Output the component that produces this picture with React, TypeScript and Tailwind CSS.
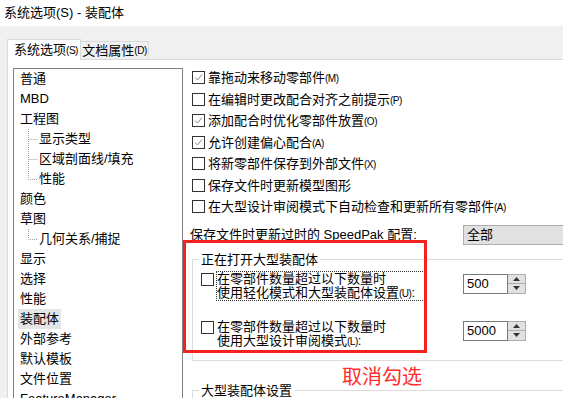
import React from 'react';

const font = { fontFamily: '"Liberation Sans", "Noto Sans CJK SC", sans-serif' };

const Box: React.FC<{ checked?: boolean }> = ({ checked }) => (
  <span className="w-[13px] h-[13px] shrink-0 border border-[#333333] bg-white flex items-center justify-center">
    {checked && (
      <svg width="11" height="11" viewBox="0 0 11 11">
        <path d="M2 5.5 L4.5 8 L9 2.5" fill="none" stroke="#8a8a8a" strokeWidth="1" />
      </svg>
    )}
  </span>
);

const Key: React.FC<{ k: string }> = ({ k }) => <span className="text-[10px] tracking-[-0.5px]">({k})</span>;

const options: { text: string; key?: string; checked: boolean }[] = [
  { text: '靠拖动来移动零部件', key: 'M', checked: true },
  { text: '在编辑时更改配合对齐之前提示', key: 'P', checked: false },
  { text: '添加配合时优化零部件放置', key: 'O', checked: true },
  { text: '允许创建偏心配合', key: 'A', checked: true },
  { text: '将新零部件保存到外部文件', key: 'X', checked: false },
  { text: '保存文件时更新模型图形', checked: false },
  { text: '在大型设计审阅模式下自动检查和更新所有零部件', key: 'A', checked: false },
];

type Node = { label: string; sub?: boolean; last?: boolean; selected?: boolean };
const tree: Node[] = [
  { label: '普通' },
  { label: 'MBD' },
  { label: '工程图' },
  { label: '显示类型', sub: true },
  { label: '区域剖面线/填充', sub: true },
  { label: '性能', sub: true, last: true },
  { label: '颜色' },
  { label: '草图' },
  { label: '几何关系/捕捉', sub: true, last: true },
  { label: '显示' },
  { label: '选择' },
  { label: '性能' },
  { label: '装配体', selected: true },
  { label: '外部参考' },
  { label: '默认模板' },
  { label: '文件位置' },
  { label: 'FeatureManager' },
];

const Spin: React.FC<{ value: string }> = ({ value }) => (
  <div className="flex h-[20px] w-[63px] shrink-0">
    <div className="flex-1 border border-[#7a7a7a] bg-white pl-[3px] flex items-center text-[13px]">{value}</div>
    <div className="w-[18px] flex flex-col border border-[#adadad] border-l-0 bg-[#e1e1e1]">
      <div className="flex-1 flex items-center justify-center border-b border-[#adadad]">
        <svg width="7" height="4" viewBox="0 0 7 4"><path d="M0 4 L3.5 0 L7 4 Z" fill="#333" /></svg>
      </div>
      <div className="flex-1 flex items-center justify-center">
        <svg width="7" height="4" viewBox="0 0 7 4"><path d="M0 0 L3.5 4 L7 0 Z" fill="#333" /></svg>
      </div>
    </div>
  </div>
);

export default function App() {
  return (
    <div className="relative w-[563px] h-[398px] overflow-hidden bg-[#f0f0f0] text-[13px] text-black" style={font}>
      {/* title */}
      <div className="h-[26px] bg-white pl-[4px] flex items-center text-[13px]">系统选项(S) - 装配体</div>

      {/* tabs */}
      <div className="mt-[13px] pl-[7px] flex items-end h-[20px]">
        <div className="h-[21px] w-[74px] bg-white border border-[#d9d9d9] border-b-0 flex items-center justify-center pl-[4px] relative z-10 -mb-px">
          系统选项<Key k="S" />
        </div>
        <div className="h-[18px] w-[68px] bg-[#f0f0f0] border border-[#d9d9d9] border-l-0 border-b-0 flex items-center justify-center">
          文档属性<Key k="D" />
        </div>
      </div>

      {/* panel */}
      <div className="ml-[7px] bg-white border-t border-l border-[#d9d9d9] h-[400px] flex">
        {/* tree list */}
        <div className="ml-[5px] mt-[8px] w-[170px] h-[400px] border border-[#828282] flex flex-col">
          {tree.map((n, i) => (
            <div key={i} className="h-[20px] flex items-center shrink-0">
              {n.sub ? (
                <>
                  <svg width="19" height="20" className="ml-[6px] shrink-0">
                    <path d={n.last ? 'M8.5 0 V10.5 H18' : 'M8.5 0 V20 M8.5 10.5 H18'} stroke="#a0a0a0" strokeDasharray="1 1" fill="none" />
                  </svg>
                  <span>{n.label}</span>
                </>
              ) : (
                <span className={`ml-[4px] px-[2px] h-[20px] flex items-center ${n.selected ? 'bg-[#e5e5e5]' : ''}`}>{n.label}</span>
              )}
            </div>
          ))}
        </div>

        {/* right side */}
        <div className="flex-1 pt-[7px]">
          {options.map((o, i) => (
            <div key={i} className="h-[21.5px] flex items-center pl-[9px] gap-[3px]">
              <Box checked={o.checked} />
              <span>
                {o.text}
                {o.key && <Key k={o.key} />}
              </span>
            </div>
          ))}

          <div className="mt-[7px] h-[20px] flex items-center pl-[7px]">
            <span className="w-[273px]">保存文件时更新过时的 SpeedPak 配置:</span>
            <div className="h-[20px] flex-1 bg-[#e1e1e1] border border-[#adadad] border-r-0 pl-[3px] flex items-center">全部</div>
          </div>

          <fieldset className="mt-[7px] ml-[9px] border border-[#dcdcdc] border-r-0 h-[109px]">
            <legend className="ml-[6px] px-[2px] leading-[16px]">正在打开大型装配体</legend>
            <div className="pl-[8px] pt-[3px] flex items-start">
              <div className="mt-[2px]"><Box /></div>
              <div className="ml-[2px] w-[211px] h-[30px] outline-1 outline-dotted outline-[#333] -outline-offset-1 leading-[14px] pt-[1px] pl-[1px]">
                在零部件数量超过以下数量时<br />使用轻化模式和大型装配体设置<Key k="U" />:
              </div>
              <div className="ml-[36px] mt-[3px]"><Spin value="500" /></div>
            </div>
            <div className="pl-[8px] pt-[18px] flex items-start">
              <div className="mt-[2px]"><Box /></div>
              <div className="ml-[2px] w-[211px] leading-[14px] pt-[1px] pl-[1px]">
                在零部件数量超过以下数量时<br />使用大型设计审阅模式<Key k="L" />:
              </div>
              <div className="ml-[36px] mt-[2px]"><Spin value="5000" /></div>
            </div>
          </fieldset>

          <fieldset className="mt-[22px] ml-[9px] border border-[#dcdcdc] border-r-0 h-[60px]">
            <legend className="ml-[6px] px-[2px] leading-[16px]">大型装配体设置</legend>
          </fieldset>
        </div>
      </div>

      {/* annotation */}
      <div className="absolute left-[183px] top-[240px] w-[244px] h-[113px] border-[3px] border-[#f5211d] pointer-events-none" />
      <div className="absolute left-[342px] top-[364px] text-[20px] text-[#ff2d2d] leading-[26px]">取消勾选</div>
    </div>
  );
}
